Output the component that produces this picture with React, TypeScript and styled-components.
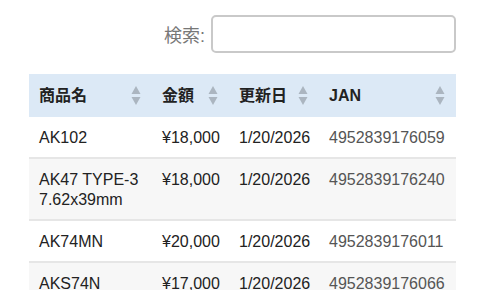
import { FunctionComponent } from "react";
import styled, { createGlobalStyle } from "styled-components";

const GlobalStyle = createGlobalStyle`
  body {
    margin: 0;
    background: #fff;
    font-family: "Liberation Sans", "Noto Sans CJK JP", Arial, sans-serif;
    color: #222;
  }
`;

export const Page = styled.div`
  padding: 15px 30px 0 29px;
`;

export const SearchBar = styled.label`
  display: flex;
  justify-content: flex-end;
  align-items: center;
  gap: 6px;
  font-size: 18px;
  color: #777;
`;

export const SearchInput = styled.input`
  box-sizing: border-box;
  width: 245px;
  height: 38px;
  border: 2px solid #c9c9c9;
  border-radius: 5px;
  background: #fff;
  outline: none;
`;

export const Table = styled.table`
  margin-top: 21px;
  width: 100%;
  table-layout: fixed;
  border-collapse: collapse;
  font-size: 16px;
`;

export const HeaderCell = styled.th<{ $width?: number }>`
  box-sizing: border-box;
  width: ${(p) => (p.$width ? `${p.$width}px` : "auto")};
  background: #dce9f6;
  padding: 11px 11px 11px 10px;
  line-height: 21px;
  text-align: left;
  font-weight: bold;
  color: #222;
`;

export const HeaderInner = styled.div`
  display: flex;
  justify-content: space-between;
  align-items: center;
`;

export const Row = styled.tr<{ $striped?: boolean }>`
  background: ${(p) => (p.$striped ? "#f7f7f7" : "#fff")};
  border-bottom: 2px solid #e6e6e6;
`;

export const Cell = styled.td<{ $muted?: boolean; $wrap?: boolean }>`
  box-sizing: border-box;
  padding: 11px 4px 9px 10px;
  line-height: 20px;
  vertical-align: top;
  white-space: ${(p) => (p.$wrap ? "normal" : "nowrap")};
  color: ${(p) => (p.$muted ? "#555" : "#222")};
`;

const SortIcon: FunctionComponent = () => (
  <svg width="10" height="20" viewBox="0 0 10 20">
    <polygon points="5,0 9.5,8 0.5,8" fill="#abb5c0" />
    <polygon points="0.5,11 9.5,11 5,19" fill="#abb5c0" />
  </svg>
);

type Item = { name: string; price: string; date: string; jan: string };

const items: Item[] = [
  { name: "AK102", price: "¥18,000", date: "1/20/2026", jan: "4952839176059" },
  { name: "AK47 TYPE-3 7.62x39mm", price: "¥18,000", date: "1/20/2026", jan: "4952839176240" },
  { name: "AK74MN", price: "¥20,000", date: "1/20/2026", jan: "4952839176011" },
  { name: "AKS74N", price: "¥17,000", date: "1/20/2026", jan: "4952839176066" },
];

const columns = [
  { label: "商品名", width: 123 },
  { label: "金額", width: 77 },
  { label: "更新日", width: 90 },
  { label: "JAN" },
];

const App: FunctionComponent = () => {
  return (
    <Page>
      <GlobalStyle />
      <SearchBar>
        検索:
        <SearchInput type="search" />
      </SearchBar>
      <Table>
        <thead>
          <tr>
            {columns.map((c) => (
              <HeaderCell key={c.label} $width={c.width}>
                <HeaderInner>
                  <span>{c.label}</span>
                  <SortIcon />
                </HeaderInner>
              </HeaderCell>
            ))}
          </tr>
        </thead>
        <tbody>
          {items.map((item, i) => (
            <Row key={item.jan} $striped={i % 2 === 1}>
              <Cell $wrap>{item.name}</Cell>
              <Cell>{item.price}</Cell>
              <Cell>{item.date}</Cell>
              <Cell $muted>{item.jan}</Cell>
            </Row>
          ))}
        </tbody>
      </Table>
    </Page>
  );
};

export default App;
